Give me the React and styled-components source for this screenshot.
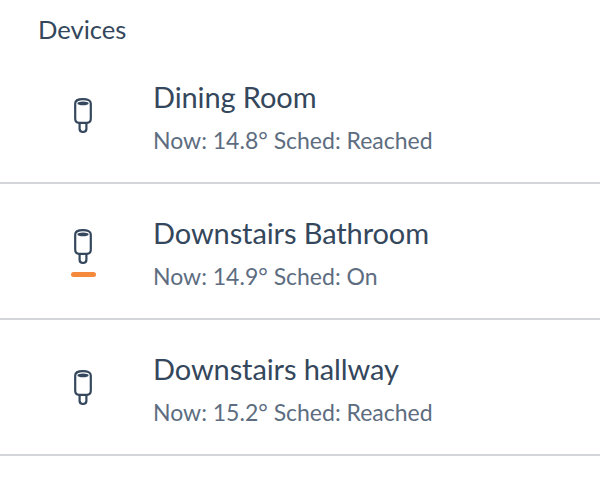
import React from 'react';
import styled, { createGlobalStyle } from 'styled-components';

const Global = createGlobalStyle`
  html, body { margin: 0; padding: 0; background: #fff; }
  body { font-family: Lato, "Noto Sans", sans-serif; overflow: hidden; }
`;
const Page = styled.div`
  width: 600px;
  height: 477px;
  background: #fff;
  overflow: hidden;
`;
const Title = styled.h2`
  margin: 0;
  height: 48px;
  box-sizing: border-box;
  padding: 14px 0 0 38px;
  font-size: 25.6px;
  line-height: 30px;
  font-weight: 400;
  color: #34475c;
`;
const List = styled.div`
  display: flex;
  flex-direction: column;
`;
const Row = styled.div`
  height: 136px;
  box-sizing: border-box;
  border-bottom: 2px solid #d4d5d8;
  display: grid;
  grid-template-columns: 153px 1fr;
`;
const IconCell = styled.div`
  position: relative;
  display: flex;
  align-items: flex-start;
  padding-left: 74px;
  padding-top: ${(p) => (p.$active ? '45px' : '50px')};
`;
const Underline = styled.div`
  position: absolute;
  top: 88px;
  left: 71px;
  width: 25px;
  height: 5px;
  border-radius: 3px;
  background: #f58a3c;
`;
const Info = styled.div`
  padding-top: 31px;
`;
const Name = styled.div`
  font-size: 29px;
  line-height: 36px;
  letter-spacing: -0.1px;
  color: #34475c;
`;
const Status = styled.div`
  margin-top: 10px;
  font-size: 23px;
  line-height: 30px;
  color: #5d6d7f;
`;

const Plug = () => (
  <svg width="18" height="36" viewBox="0 0 18 36" fill="none" stroke="#34475c" strokeWidth="2.2">
    <path d="M1.2 5.5C1.2 2.6 4.5 1.2 9 1.2s7.8 1.4 7.8 4.3v15c0 3-1.5 4.3-4 4.3H5.2c-2.5 0-4-1.3-4-4.3z" />
    <ellipse cx="9" cy="5.4" rx="5.6" ry="1.9" fill="#34475c" stroke="none" />
    <path d="M5.6 24.8v6c0 2 1.4 3.2 3.4 3.2s3.4-1.2 3.4-3.2v-6" />
  </svg>
);

const devices = [
  { name: 'Dining Room', status: 'Now: 14.8° Sched: Reached' },
  { name: 'Downstairs Bathroom', status: 'Now: 14.9° Sched: On', active: true },
  { name: 'Downstairs hallway', status: 'Now: 15.2° Sched: Reached' },
];

export default function App() {
  return (
    <Page>
      <Global />
      <Title>Devices</Title>
      <List>
        {devices.map((d) => (
          <Row key={d.name}>
            <IconCell $active={d.active}>
              <Plug />
              {d.active && <Underline />}
            </IconCell>
            <Info>
              <Name>{d.name}</Name>
              <Status>{d.status}</Status>
            </Info>
          </Row>
        ))}
      </List>
    </Page>
  );
}
